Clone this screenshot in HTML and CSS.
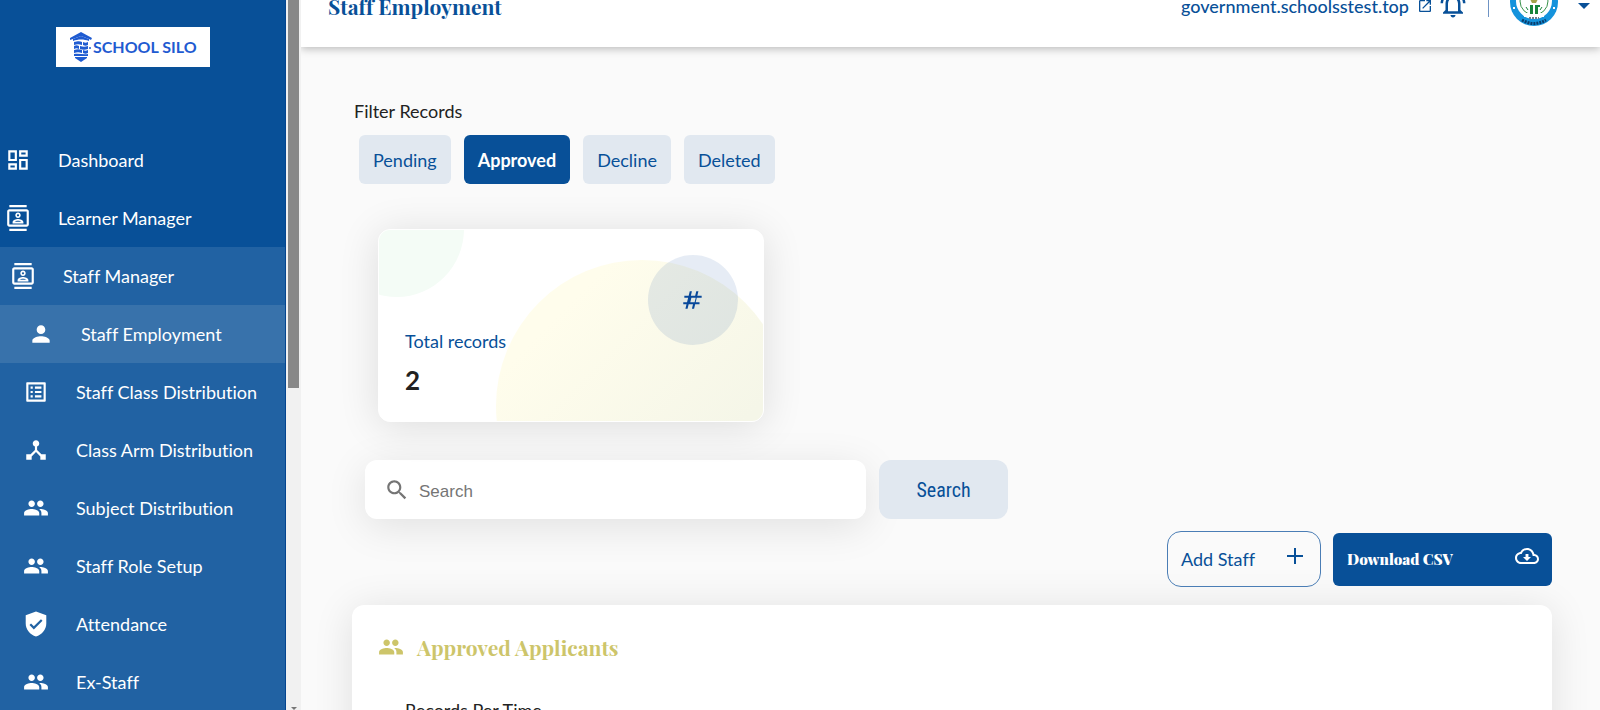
FILE: index.html
```html
<!DOCTYPE html>
<html lang="en">
<head>
    <title>Staff Employment</title>
    <meta charset="utf-8" />
    <link rel="stylesheet" href="styles.css">
</head>
<body>
    <svg class="sprite" aria-hidden="true">
        <symbol id="people" viewBox="0 0 24 24"><path d="M16 11c1.66 0 2.99-1.34 2.99-3S17.66 5 16 5s-3 1.34-3 3 1.34 3 3 3zm-8 0c1.66 0 2.99-1.34 2.99-3S9.660 5 8 5 5 6.340 5 8s1.340 3 3 3zm0 2c-2.330 0-7 1.170-7 3.500V19h14v-2.500c0-2.330-4.670-3.500-7-3.500zm8 0c-.29 0-.62.02-.97.05 1.160.84 1.970 1.970 1.970 3.450V19h6v-2.500c0-2.330-4.670-3.500-7-3.500z"/></symbol>
        <symbol id="contacts" viewBox="0 0 24 24"><path d="M20 4H4c-1.100 0-2 .9-2 2v12c0 1.100.9 2 2 2h16c1.100 0 2-.9 2-2V6c0-1.100-.9-2-2-2zm0 14H4V6h16v12zM4 0h16v2H4zm0 22h16v2H4zm8-10c1.380 0 2.500-1.120 2.500-2.500S13.380 7 12 7 9.500 8.120 9.500 9.500 10.620 12 12 12zm0-3.500c.55 0 1 .45 1 1s-.45 1-1 1-1-.45-1-1 .45-1 1-1zm5 7.490C17 13.900 13.690 13 12 13s-5 .9-5 2.990V17h10v-1.010zm-8.190-.49c.61-.52 2.030-1 3.190-1 1.170 0 2.590.48 3.200 1H8.810z"/></symbol>
    </svg>
    <div class="page">
        <aside class="sidebar">
            <a class="logo" href="#">
                <svg class="logo-mark" viewBox="0 0 22 30">
                    <path d="M11 0L22 6l-1 2-2-1-8-3-8 3-3 1V6z"/>
                    <path d="M3 7l8-3 8 3v2c-5-2-11-2-16 0zM4 10c4-1 6-1 8 0v3c-3-1-5-1-8 0zM13 10c2 1 3 1 5 0v3c-2 1-3 1-5 0zM4 14c2-1 3-1 5 0v3c-2-1-3-1-5 0zM10 14c3 1 5 1 8 0v3c-3 1-5 1-8 0zM4 18c3-1 5-1 8 0v3c-3-1-5-1-8 0zM13 18c2 1 3 1 5 0v3c-2 1-3 1-5 0zM4 22c5-1 9 1 14 0v2H4zM5 25h12v1l-6 4-6-4z"/>
                    <circle cx="20" cy="16" r="1"/>
                </svg>
                <span>SCHOOL SILO</span>
            </a>
            <nav class="menu">
                <a href="#" class="menu-item">
                    <svg class="icon" viewBox="0 0 24 24"><path d="M19 5v2h-4V5h4M9 5v6H5V5h4m10 8v6h-4v-6h4M9 17v2H5v-2h4M21 3h-8v6h8V3zM11 3H3v10h8V3zm10 8h-8v10h8V11zm-10 4H3v6h8v-6z"/></svg>
                    Dashboard
                </a>
                <a href="#" class="menu-item"><svg class="icon"><use href="#contacts"/></svg>Learner Manager</a>
                <div class="submenu">
                    <a href="#" class="menu-item open"><svg class="icon"><use href="#contacts"/></svg>Staff Manager</a>
                    <a href="#" class="menu-item sub active">
                        <svg class="icon" viewBox="0 0 24 24"><path d="M12 12c2.210 0 4-1.790 4-4s-1.790-4-4-4-4 1.790-4 4 1.790 4 4 4zm0 2c-2.670 0-8 1.340-8 4v2h16v-2c0-2.660-5.330-4-8-4z"/></svg>
                        Staff Employment
                    </a>
                    <a href="#" class="menu-item sub">
                        <svg class="icon" viewBox="0 0 24 24"><path d="M19 5v14H5V5h14m1.100-2H3.900c-.5 0-.9.4-.9.9v16.200c0 .4.4.9.9.9h16.200c.4 0 .9-.5.9-.9V3.900c0-.5-.5-.9-.9-.9zM11 7h6v2h-6V7zm0 4h6v2h-6v-2zm0 4h6v2h-6zM7 7h2v2H7zm0 4h2v2H7zm0 4h2v2H7z"/></svg>
                        Staff Class Distribution
                    </a>
                    <a href="#" class="menu-item sub">
                        <svg class="icon" viewBox="0 0 24 24"><path d="M17 16l-4-4V8.820C14.160 8.400 15 7.300 15 6c0-1.660-1.340-3-3-3S9 4.340 9 6c0 1.300.84 2.400 2 2.820V12l-4 4H3v5h5v-3.050l4-4.200 4 4.200V21h5v-5h-4z"/></svg>
                        Class Arm Distribution
                    </a>
                    <a href="#" class="menu-item sub"><svg class="icon"><use href="#people"/></svg>Subject Distribution</a>
                    <a href="#" class="menu-item sub"><svg class="icon"><use href="#people"/></svg>Staff Role Setup</a>
                    <a href="#" class="menu-item sub">
                        <svg class="icon" viewBox="0 0 24 24"><path fill-rule="evenodd" d="M12 0.500L2.500 4v7.500c0 5.500 4 10.500 9.500 12 5.500-1.500 9.500-6.500 9.500-12V4L12 0.500zM10 17l-4-4 1.410-1.410L10 14.170l6.590-6.590L18 9l-8 8z"/></svg>
                        Attendance
                    </a>
                    <a href="#" class="menu-item sub"><svg class="icon"><use href="#people"/></svg>Ex-Staff</a>
                </div>
            </nav>
        </aside>
        <div class="scrollbar">
            <div class="thumb"></div>
            <div class="arrow"></div>
        </div>
        <div class="content">
            <header class="topbar">
                <h1>Staff Employment</h1>
                <a class="site" href="#">
                    government.schoolsstest.top
                    <svg viewBox="0 0 24 24"><path d="M19 19H5V5h7V3H5c-1.110 0-2 .9-2 2v14c0 1.100.89 2 2 2h14c1.100 0 2-.9 2-2v-7h-2v7zM14 3v2h3.590l-9.830 9.830 1.410 1.410L19 6.410V10h2V3h-7z"/></svg>
                </a>
                <button class="bell" aria-label="Notifications">
                    <svg viewBox="0 0 24 24"><path d="M12 22c1.100 0 2-.9 2-2h-4c0 1.100.9 2 2 2zm6-6v-5c0-3.070-1.630-5.640-4.500-6.320V4c0-.83-.67-1.500-1.500-1.500s-1.500.67-1.500 1.500v.68C7.640 5.360 6 7.920 6 11v5l-2 2v1h16v-1l-2-2zm-2 1H8v-6c0-2.480 1.510-4.500 4-4.500s4 2.020 4 4.500v6zM7.580 4.080L6.150 2.650C3.750 4.480 2.170 7.300 2.030 10.500h2c.15-2.650 1.510-4.970 3.550-6.420zm12.390 6.420h2c-.15-3.200-1.730-6.020-4.120-7.850l-1.420 1.430c2.020 1.450 3.390 3.770 3.540 6.420z"/></svg>
                </button>
                <span class="divider"></span>
                <button class="account" aria-label="Account">
                    <svg class="avatar" viewBox="0 0 48 48">
                        <circle cx="24" cy="24" r="24" fill="#1593dc"/>
                        <circle cx="24" cy="23" r="18" fill="#fff"/>
                        <circle cx="24" cy="23" r="14" fill="none" stroke="#39934c"/>
                        <path d="M14 35h20v4H14z" fill="#fff"/>
                        <path d="M20 21h8l-2 4h-4z" fill="#a2a34a"/>
                        <path d="M20 27h3v9h-3zM25 27h5v2h-2v7h-3z" fill="#16843a"/>
                        <path d="M16 29l2 3M32 29l-2 3" stroke="#16843a"/>
                        <path d="M19 40h10" stroke="#6c7d8b" stroke-width="2" stroke-dasharray="2 1"/>
                        <path d="M12 42q12 7 24 0" fill="none" stroke="#0a3d6c" stroke-width="3" stroke-dasharray="2 1"/>
                        <path d="M3 30h2M43 30h2" stroke="#fff" stroke-width="2"/>
                    </svg>
                    <span class="caret"></span>
                </button>
            </header>
            <main>
                <p class="filter-label">Filter Records</p>
                <div class="filters">
                    <button>Pending</button>
                    <button class="selected">Approved</button>
                    <button>Decline</button>
                    <button>Deleted</button>
                </div>
                <section class="card">
                    <span class="blob green"></span>
                    <span class="blob yellow"></span>
                    <span class="badge">
                        <svg viewBox="0 0 24 24"><path d="M20 10V8h-4l1-4h-2l-1 4h-4l1-4H9L8 8H4v2h3.500l-1 4H3v2h3l-1 4h2l1-4h4l-1 4h2l1-4h4v-2h-3.500l1-4H20zm-6.500 4h-4l1-4h4l-1 4z"/></svg>
                    </span>
                    <p class="card-label">Total records</p>
                    <p class="card-value">2</p>
                </section>
                <form class="search">
                    <label class="search-box">
                        <svg class="icon" viewBox="0 0 24 24"><path d="M15.500 14h-.79l-.28-.27C15.410 12.590 16 11.110 16 9.500 16 5.910 13.090 3 9.500 3S3 5.910 3 9.500 5.910 16 9.500 16c1.610 0 3.090-.59 4.230-1.570l.27.28v.79l5 4.990L20.490 19l-4.990-5zm-6 0C7.010 14 5 11.990 5 9.500S7.010 5 9.500 5 14 7.010 14 9.500 11.990 14 9.500 14z"/></svg>
                        <input type="text" placeholder="Search" aria-label="Search">
                    </label>
                    <button type="button">Search</button>
                </form>
                <div class="actions">
                    <button class="add">
                        Add Staff
                        <svg viewBox="0 0 24 24"><path d="M20 13h-7v7h-2v-7H4v-2h7V4h2v7h7v2z"/></svg>
                    </button>
                    <button class="download">
                        Download CSV
                        <svg viewBox="0 0 24 24"><path d="M19.350 10.040C18.670 6.590 15.640 4 12 4 9.110 4 6.600 5.640 5.350 8.040 2.340 8.360 0 10.910 0 14c0 3.310 2.690 6 6 6h13c2.760 0 5-2.240 5-5 0-2.640-2.050-4.780-4.650-4.960zM19 18H6c-2.210 0-4-1.790-4-4 0-2.050 1.530-3.760 3.560-3.970l1.070-.11.5-.95C8.080 7.140 9.940 6 12 6c2.620 0 4.880 1.860 5.390 4.430l.3 1.500 1.530.11c1.560.1 2.780 1.410 2.780 2.960 0 1.650-1.350 3-3 3zm-5.550-8h-2.900v3H8l4 4 4-4h-2.550z"/></svg>
                    </button>
                </div>
                <section class="panel">
                    <h2><svg class="icon"><use href="#people"/></svg>Approved Applicants</h2>
                    <p>Records Per Time</p>
                </section>
            </main>
        </div>
    </div>
</body>
</html>
```
FILE: styles.css
```css
* {
    box-sizing: border-box;
}
body {
    margin: 0;
    font-family: Lato, sans-serif;
    font-size: 18px;
    line-height: 26px;
    font-variant-ligatures: none;
    color: #222;
    background-color: #fafafa;
    overflow: hidden;
}
h1, h2, p {
    margin: 0;
}
a {
    color: inherit;
    text-decoration: none;
}
button, input {
    font: inherit;
    border: none;
}
button {
    color: #085098;
    cursor: pointer;
}
svg {
    fill: currentColor;
    flex: none;
}
.sprite {
    display: none;
}
.icon {
    width: 26px;
    height: 26px;
}
.page {
    display: flex;
    height: 100vh;
}
.sidebar {
    flex: none;
    width: 286px;
    padding-top: 27px;
    overflow: hidden;
    color: #fff;
    background-color: #085098;
    border-right: 1px solid #04458f;
}
.logo {
    display: flex;
    align-items: center;
    gap: 1px;
    width: 154px;
    height: 40px;
    margin: 0 0 64px 56px;
    padding-left: 14px;
    background-color: #fff;
    color: #1f5bd1;
    font-size: 16px;
    font-weight: bold;
}
.logo-mark {
    width: 22px;
    height: 30px;
}
.menu-item {
    display: flex;
    align-items: center;
    gap: 27px;
    height: 58px;
    padding-left: 5px;
}
.submenu {
    background-color: #2162a3;
}
.menu-item.open {
    padding-left: 10px;
}
.menu-item.sub {
    padding-left: 23px;
}
.menu-item.active {
    padding-left: 28px;
    background-color: #3872ab;
}
.scrollbar {
    display: flex;
    flex-direction: column;
    justify-content: space-between;
    align-items: center;
    flex: none;
    width: 15px;
    background-color: #f1f1f1;
}
.thumb {
    width: 11px;
    height: 388px;
    background-color: #888;
}
.arrow {
    border: 3px solid transparent;
    border-top-color: #777;
    border-bottom: none;
}
.content {
    flex: 1;
    overflow: hidden;
}
.topbar {
    display: flex;
    align-items: center;
    height: 90px;
    margin-top: -43px;
    padding: 0 10px 0 27px;
    color: #085098;
    background-color: #fff;
    box-shadow: 0 2px 8px rgba(0, 0, 0, 0.25);
}
.topbar h1 {
    flex: 1;
    padding-top: 8px;
    font-family: "Playfair Display", "Liberation Serif", serif;
    font-size: 21px;
}
.site {
    display: flex;
    align-items: center;
    gap: 8px;
    padding-top: 8px;
    font-weight: 500;
}
.site svg {
    width: 16px;
    height: 16px;
}
.bell {
    display: flex;
    margin: 6px 20px 0 5px;
    padding: 0;
    background: none;
}
.bell svg {
    width: 30px;
    height: 30px;
}
.divider {
    width: 1px;
    height: 30px;
    background-color: #6f93c4;
}
.account {
    display: flex;
    align-items: center;
    gap: 20px;
    margin-left: 21px;
    padding: 0;
    background: none;
}
.avatar {
    width: 48px;
    height: 48px;
}
.caret {
    margin-top: 8px;
    border: 6px solid transparent;
    border-top-color: #085098;
    border-bottom: none;
}
main {
    padding: 51px 48px 0 51px;
}
.filter-label {
    margin-left: 2px;
}
.filters {
    display: flex;
    gap: 13px;
    margin: 11px 0 45px 7px;
}
.filters button {
    height: 49px;
    padding: 0 14px;
    border-radius: 6px;
    background-color: #e1e8f0;
}
.filters .selected {
    color: #fff;
    font-weight: bold;
    background-color: #085098;
}
.card {
    position: relative;
    width: 386px;
    height: 193px;
    margin: 0 0 38px 26px;
    padding: 98px 26px 0;
    border: 1px solid #fff;
    border-radius: 12px;
    overflow: hidden;
    background-color: #fff;
    box-shadow: 0 4px 40px rgba(0, 0, 0, 0.12);
}
.blob, .badge {
    position: absolute;
    border-radius: 50%;
}
.green {
    left: -49px;
    top: -69px;
    width: 134px;
    height: 136px;
    background-color: #f4fcf6;
}
.yellow {
    left: 117px;
    top: 30px;
    width: 292px;
    height: 292px;
    background-image: linear-gradient(135deg, #fffdec 20%, #f5f6e8 70%);
}
.badge {
    display: flex;
    align-items: center;
    justify-content: center;
    top: 25px;
    right: 25px;
    width: 90px;
    height: 90px;
    color: #08489a;
    background-color: rgba(8, 72, 160, 0.1);
}
.badge svg {
    width: 26px;
    height: 26px;
}
.card-label {
    position: relative;
    color: #085098;
}
.card-value {
    position: relative;
    margin-top: 10px;
    font-size: 26px;
    font-weight: bold;
    line-height: 32px;
}
.search {
    display: flex;
    gap: 13px;
    margin: 0 0 12px 13px;
}
.search-box {
    display: flex;
    align-items: center;
    gap: 9px;
    width: 501px;
    height: 59px;
    padding: 0 25px 0 19px;
    border-radius: 12px;
    color: #757575;
    background-color: #fff;
    box-shadow: 0 8px 40px rgba(0, 0, 0, 0.1);
}
.search-box input {
    flex: 1;
    min-width: 0;
    padding: 4px 0 0;
    outline: none;
    background: none;
    font-family: "Liberation Sans", Arial, sans-serif;
    font-size: 17px;
}
.search-box input::placeholder {
    color: #757575;
}
.search > button {
    width: 129px;
    border-radius: 12px;
    font-family: "Roboto Condensed", Roboto, sans-serif;
    font-size: 20px;
    background-color: #e1e8f0;
}
.actions {
    display: flex;
    justify-content: flex-end;
    align-items: center;
    gap: 12px;
    height: 56px;
    margin-bottom: 18px;
}
.actions button {
    display: flex;
    align-items: center;
    justify-content: space-between;
    padding: 0 13px;
}
.actions .add {
    width: 154px;
    height: 56px;
    border: 1px solid #4a7db5;
    border-radius: 14px;
    background: none;
}
.actions svg {
    width: 24px;
    height: 24px;
    margin-bottom: 6px;
}
.actions .download {
    width: 219px;
    height: 53px;
    padding-left: 14px;
    border-radius: 6px;
    color: #fff;
    background-color: #085098;
    font-family: "Playfair Display", "Liberation Serif", serif;
    font-size: 15px;
    font-weight: 900;
}
.panel {
    height: 300px;
    padding: 28px 26px;
    border-radius: 12px;
    background-color: #fff;
    box-shadow: 0 4px 40px rgba(0, 0, 0, 0.11);
}
.panel h2 {
    display: flex;
    align-items: center;
    gap: 13px;
    color: #cdc56a;
    font-family: "Playfair Display", "Liberation Serif", serif;
    font-size: 21px;
    line-height: 28px;
}
.panel p {
    margin: 36px 0 0 27px;
}
```
